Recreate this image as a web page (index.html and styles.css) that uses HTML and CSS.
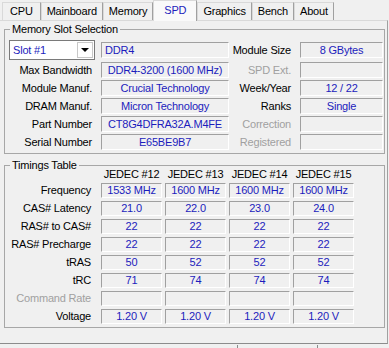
FILE: index.html
```html
<!DOCTYPE html>
<html lang="en">
<head>
  <meta charset="UTF-8">
  <title>CPU-Z - SPD</title>
  <link rel="stylesheet" href="styles.css">
</head>
<body>

  <div class="tabs">
    <span class="tab first">CPU</span>
    <span class="tab">Mainboard</span>
    <span class="tab">Memory</span>
    <span class="tab active">SPD</span>
    <span class="tab">Graphics</span>
    <span class="tab">Bench</span>
    <span class="tab">About</span>
  </div>

  <div class="panel">
    <fieldset class="group">
      <legend>Memory Slot Selection</legend>
      <div class="slot-grid">
        <div class="select"><span>Slot #1</span><span class="arrow"></span></div>
        <div class="box start mid">DDR4</div>
        <div class="lbl mid">Module Size</div>
        <div class="box mid">8 GBytes</div>

        <div class="lbl">Max Bandwidth</div>
        <div class="box">DDR4-3200 (1600 MHz)</div>
        <div class="lbl dim">SPD Ext.</div>
        <div class="box"></div>

        <div class="lbl">Module Manuf.</div>
        <div class="box">Crucial Technology</div>
        <div class="lbl">Week/Year</div>
        <div class="box">12 / 22</div>

        <div class="lbl">DRAM Manuf.</div>
        <div class="box">Micron Technology</div>
        <div class="lbl">Ranks</div>
        <div class="box">Single</div>

        <div class="lbl">Part Number</div>
        <div class="box">CT8G4DFRA32A.M4FE</div>
        <div class="lbl dim">Correction</div>
        <div class="box"></div>

        <div class="lbl">Serial Number</div>
        <div class="box">E65BE9B7</div>
        <div class="lbl dim">Registered</div>
        <div class="box"></div>
      </div>
    </fieldset>

    <fieldset class="group timings">
      <legend>Timings Table</legend>
      <div class="timing-grid">
        <div></div>
        <div class="head">JEDEC #12</div>
        <div class="head">JEDEC #13</div>
        <div class="head">JEDEC #14</div>
        <div class="head">JEDEC #15</div>

        <div class="lbl">Frequency</div>
        <div class="box">1533 MHz</div>
        <div class="box">1600 MHz</div>
        <div class="box">1600 MHz</div>
        <div class="box">1600 MHz</div>

        <div class="lbl">CAS# Latency</div>
        <div class="box">21.0</div>
        <div class="box">22.0</div>
        <div class="box">23.0</div>
        <div class="box">24.0</div>

        <div class="lbl">RAS# to CAS#</div>
        <div class="box">22</div>
        <div class="box">22</div>
        <div class="box">22</div>
        <div class="box">22</div>

        <div class="lbl">RAS# Precharge</div>
        <div class="box">22</div>
        <div class="box">22</div>
        <div class="box">22</div>
        <div class="box">22</div>

        <div class="lbl">tRAS</div>
        <div class="box">50</div>
        <div class="box">52</div>
        <div class="box">52</div>
        <div class="box">52</div>

        <div class="lbl">tRC</div>
        <div class="box">71</div>
        <div class="box">74</div>
        <div class="box">74</div>
        <div class="box">74</div>

        <div class="lbl dim">Command Rate</div>
        <div class="box"></div>
        <div class="box"></div>
        <div class="box"></div>
        <div class="box"></div>

        <div class="lbl">Voltage</div>
        <div class="box">1.20 V</div>
        <div class="box">1.20 V</div>
        <div class="box">1.20 V</div>
        <div class="box">1.20 V</div>
      </div>
    </fieldset>
  </div>

  <div class="status">
    <div></div>
    <div></div>
    <div></div>
  </div>

</body>
</html>
```

FILE: styles.css
```css
body {
  margin: 0;
  background: #f0f0f0;
  font-family: "Liberation Sans", Arial, sans-serif;
  font-size: 11px;
  line-height: 13px;
  letter-spacing: -0.2px;
  color: #000;
}

/* tab strip */
.tabs {
  display: flex;
  align-items: flex-end;
  height: 20px;
  padding-left: 2px;
  position: relative;
  z-index: 1;
}

.tab {
  height: 18px;
  box-sizing: border-box;
  padding: 0 5px;
  line-height: 16px;
  border: 1px solid #d9d9d9;
  border-right-color: #a0a0a0;
  border-bottom: none;
  white-space: nowrap;
}

.tab.first {
  padding: 0 7px;
}

.tab.active {
  height: 21px;
  margin-bottom: -1px;
  padding: 0 10px;
  line-height: 18px;
  background: #f9f9f9;
  color: #1c1cbd;
}

/* page */
.panel {
  width: 388px;
  height: 324px;
  box-sizing: border-box;
  border-top: 1px solid #d9d9d9;
  border-right: 1px solid #a0a0a0;
  border-bottom: 1px solid #8c8c8c;
  padding-top: 2px;
}

.group {
  margin: 0 2px 0 4px;
  padding: 0 0 3px 0;
  border: 1px solid #a7a7a7;
  min-width: 0;
}

.group legend {
  margin-left: 5px;
  padding: 0 2px;
  line-height: 13px;
}

.timings {
  margin-top: 5px;
}

.slot-grid {
  display: grid;
  grid-template-columns: 96px 128px 71px 83px;
  grid-template-rows: 20px repeat(5, 16px);
  row-gap: 2px;
  margin-top: 4px;
}

.lbl {
  text-align: right;
  padding-right: 9px;
  line-height: 16px;
  white-space: nowrap;
}

.dim {
  color: #a0a0a0;
}

.box {
  box-sizing: border-box;
  height: 16px;
  line-height: 14px;
  border: 1px solid;
  border-color: #a0a0a0 #fff #fff #a0a0a0;
  color: #1c1cbd;
  text-align: center;
  white-space: nowrap;
  overflow: hidden;
}

.box.start {
  text-align: left;
  padding-left: 3px;
}

.mid {
  align-self: center;
}

.select {
  display: flex;
  align-items: center;
  justify-content: space-between;
  width: 86px;
  margin-left: 4px;
  box-sizing: border-box;
  border: 1px solid #7a7a7a;
  background: #fff;
  color: #1c1cbd;
  padding: 1px 1px 1px 3px;
}

.arrow {
  display: flex;
  align-items: center;
  justify-content: center;
  width: 16px;
  height: 16px;
  box-sizing: border-box;
  border: 1px solid #c8c8c8;
  background: #fff;
}

.arrow::after {
  content: "";
  border-left: 4px solid transparent;
  border-right: 4px solid transparent;
  border-top: 4px solid #000;
}

/* timings */
.timing-grid {
  display: grid;
  grid-template-columns: 93px repeat(4, 61px);
  grid-template-rows: 12px repeat(8, 15px);
  column-gap: 3px;
  row-gap: 3px;
  margin-top: -4px;
}

.timing-grid .lbl {
  padding-right: 7px;
  line-height: 15px;
}

.timing-grid .box {
  height: 15px;
  line-height: 13px;
}

.head {
  text-align: center;
  line-height: 12px;
  white-space: nowrap;
}

/* status bar */
.status {
  display: grid;
  grid-template-columns: 237px 80px 1fr;
  height: 4px;
  margin-top: 1px;
}

.status div + div {
  border-left: 1px solid #8c8c8c;
}
```
